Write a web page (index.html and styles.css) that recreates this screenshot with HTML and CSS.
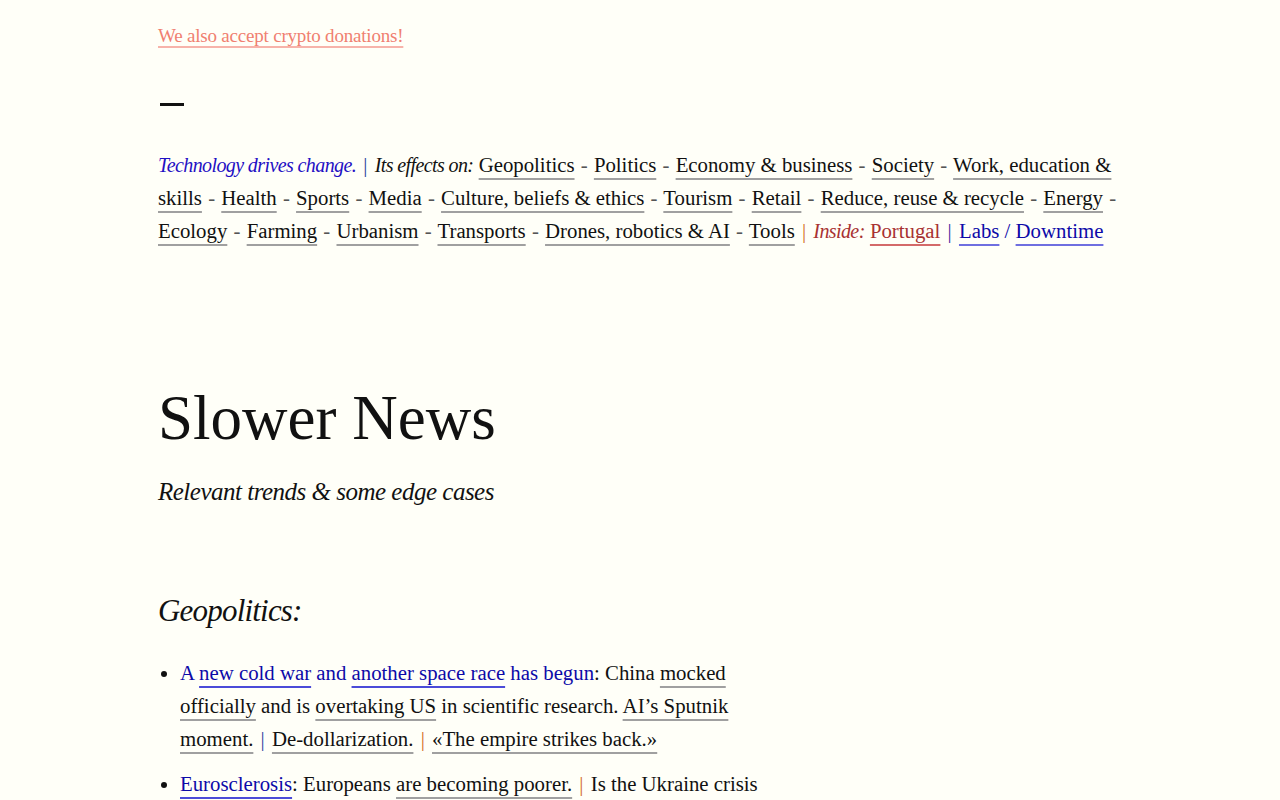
FILE: index.html
```html
<!DOCTYPE html>
<html lang="en">
<head>
<meta charset="utf-8">
<title>Slower News</title>
<link rel="stylesheet" href="styles.css">
</head>
<body>
<article class="page">
  <p class="donate"><a href="#" class="salmon">We also accept crypto donations!</a></p>
  <div class="dash"></div>

  <nav class="topics">
    <span class="motto">Technology drives change.</span>&nbsp;<span class="sep sep-blue">|</span>
    <span class="effects">Its effects on:</span>
    <a href="#">Geopolitics</a>&nbsp;<span class="dsh">-</span>
    <a href="#">Politics</a>&nbsp;<span class="dsh">-</span>
    <a href="#">Economy &amp; business</a>&nbsp;<span class="dsh">-</span>
    <a href="#">Society</a>&nbsp;<span class="dsh">-</span>
    <a href="#">Work, education &amp; skills</a>&nbsp;<span class="dsh">-</span>
    <a href="#">Health</a>&nbsp;<span class="dsh">-</span>
    <a href="#">Sports</a>&nbsp;<span class="dsh">-</span>
    <a href="#">Media</a>&nbsp;<span class="dsh">-</span>
    <a href="#">Culture, beliefs &amp; ethics</a>&nbsp;<span class="dsh">-</span>
    <a href="#">Tourism</a>&nbsp;<span class="dsh">-</span>
    <a href="#">Retail</a>&nbsp;<span class="dsh">-</span>
    <a href="#">Reduce, reuse &amp; recycle</a>&nbsp;<span class="dsh">-</span>
    <a href="#">Energy</a>&nbsp;<span class="dsh">-</span>
    <a href="#">Ecology</a>&nbsp;<span class="dsh">-</span>
    <a href="#">Farming</a>&nbsp;<span class="dsh">-</span>
    <a href="#">Urbanism</a>&nbsp;<span class="dsh">-</span>
    <a href="#">Transports</a>&nbsp;<span class="dsh">-</span>
    <a href="#">Drones, robotics &amp; AI</a>&nbsp;<span class="dsh">-</span>
    <a href="#">Tools</a>&nbsp;<span class="sep sep-orange">|</span>
    <span class="inside"><em class="it">Inside:</em> <a href="#" class="red">Portugal</a></span>&nbsp;<span class="sep sep-purple">|</span>
    <a href="#" class="navy">Labs</a> <span class="navy">/</span> <a href="#" class="navy">Downtime</a>
  </nav>

  <header class="masthead">
    <h1>Slower News</h1>
    <p class="subtitle">Relevant trends &amp; some edge cases</p>
  </header>

  <section class="topic">
    <h2>Geopolitics:</h2>
    <ul class="items">
      <li><span class="blue">A <a href="#" class="blue">new cold war</a> and <a href="#" class="blue">another space race</a> has begun</span>: China <a href="#">mocked officially</a> and is <a href="#">overtaking US</a> in scientific research. <a href="#">AI’s Sputnik moment.</a>&nbsp;<span class="sep sep-blue">|</span> <a href="#">De-dollarization.</a>&nbsp;<span class="sep sep-orange">|</span> <a href="#">«The empire strikes back.»</a></li>
      <li><a href="#" class="blue">Eurosclerosis</a>: Europeans <a href="#">are becoming poorer.</a>&nbsp;<span class="sep sep-orange">|</span> Is the Ukraine crisis <a href="#">accelerating</a> the decline?&nbsp;<span class="sep sep-orange">|</span> <a href="#">The energy shock.</a></li>
      <li><span class="blue">The <a href="#" class="blue">rise of the middle powers</a></span>: India, Turkey and the Gulf states <a href="#">play both sides.</a>&nbsp;<span class="sep sep-orange">|</span> <a href="#">The Global South.</a></li>
      <li><span class="blue"><a href="#" class="blue">Demographic decline</a></span> is reshaping <a href="#">the balance of power.</a></li>
    </ul>
  </section>

  <section class="topic">
    <h2>Politics:</h2>
    <ul class="items">
      <li><span class="blue">The <a href="#" class="blue">age of populism</a></span>: <a href="#">trust in institutions</a> keeps falling.&nbsp;<span class="sep sep-orange">|</span> <a href="#">Polarization.</a></li>
      <li><a href="#" class="blue">Surveillance states</a>: <a href="#">facial recognition</a> goes mainstream.</li>
    </ul>
  </section>

  <section class="topic">
    <h2>Economy &amp; business:</h2>
    <ul class="items">
      <li><span class="blue">The <a href="#" class="blue">platform economy</a></span>: <a href="#">winner takes all.</a>&nbsp;<span class="sep sep-orange">|</span> <a href="#">Antitrust strikes back.</a></li>
      <li><a href="#" class="blue">Inflation</a> and <a href="#">the end of cheap money.</a></li>
    </ul>
  </section>
</article>
</body>
</html>
```

FILE: styles.css
```css
html {
  font-size: 15px;
}

body {
  margin: 0;
  background: #fffff8;
  color: #111111;
  font-family: "Liberation Serif", "DejaVu Serif", serif;
}

.page {
  padding-left: 158px;
  padding-right: 60px;
  min-height: 12000px;
}

a {
  color: inherit;
  text-decoration: underline;
  text-decoration-color: #a0a0a0;
  text-decoration-thickness: 2px;
  text-underline-offset: 6px;
}

.donate {
  margin: 0;
  padding-top: 22px;
  font-size: 19px;
  line-height: 28px;
  letter-spacing: -0.2px;
}

.salmon {
  color: #f08070;
  text-decoration-color: #f7b3aa;
  text-underline-offset: 4px;
}

.dash {
  width: 24px;
  height: 3px;
  background: #111111;
  margin: 53px 0 0 2px;
}

.topics {
  margin-top: 42px;
  max-width: 972px;
  font-size: 20.8px;
  line-height: 33px;
}

.motto,
.effects,
.it {
  font-style: italic;
  font-size: 20px;
  line-height: 1;
  letter-spacing: -0.6px;
}

.motto {
  color: #1f10c4;
}

.dsh {
  color: #555555;
  margin: 0 1px;
}

.sep {
  margin: 0 2px;
}

.sep-blue {
  color: #2a40a0;
}

.sep-orange {
  color: #d2691e;
}

.sep-purple {
  color: #3a1aa0;
}

.inside {
  color: #a83232;
}

.red {
  color: #a83232;
  text-decoration-color: #d46a6a;
}

.navy {
  color: #0d0aa8;
}

a.navy {
  text-decoration-color: #6f6fe0;
}

.masthead {
  margin-top: 140px;
}

h1 {
  margin: 0;
  font-weight: 400;
  font-size: 63px;
  line-height: 1;
}

.subtitle {
  margin: 29px 0 0;
  font-style: italic;
  font-size: 25px;
  letter-spacing: -0.5px;
  line-height: 1;
}

.topic h2 {
  margin: 91px 0 0;
  font-style: italic;
  font-weight: 400;
  font-size: 31px;
  letter-spacing: -0.8px;
  line-height: 1;
}

.items {
  margin: 30px 0 0;
  padding-left: 22px;
  max-width: 582px;
  font-size: 20.8px;
  line-height: 33px;
}

.items li {
  margin-bottom: 12px;
}

.blue {
  color: #0d0aa8;
}

a.blue {
  text-decoration-color: #4b4bd8;
}
```
